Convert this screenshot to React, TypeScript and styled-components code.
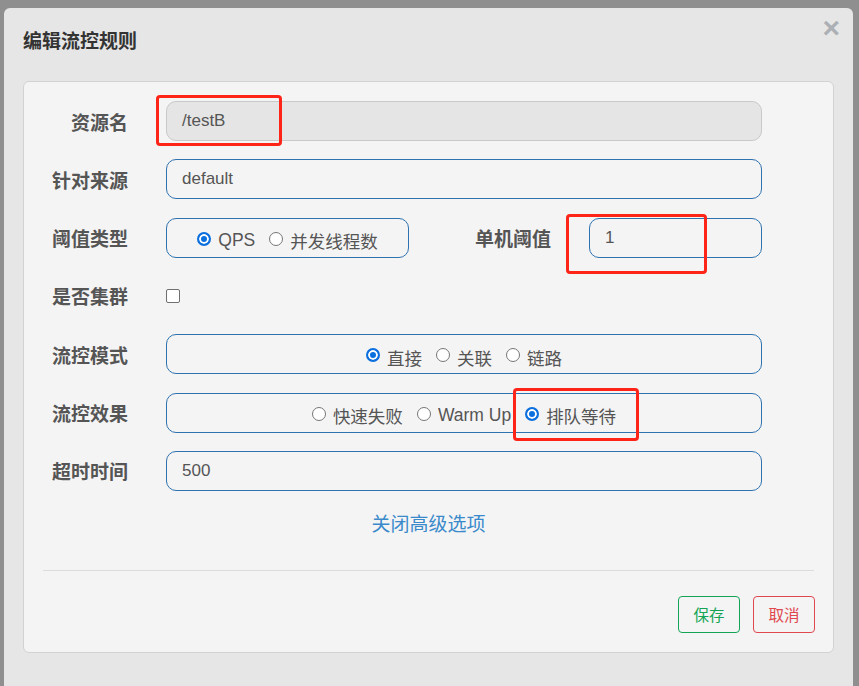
import styled, { createGlobalStyle } from "styled-components";

const GlobalStyle = createGlobalStyle`
  html, body {
    margin: 0;
    padding: 0;
    width: 100%;
    height: 100%;
    overflow: hidden;
  }
  body {
    font-family: "Liberation Sans", "Noto Sans CJK SC", sans-serif;
    background: #8f8f8f;
  }
`;

const Backdrop = styled.div`
  position: relative;
  width: 859px;
  height: 686px;
  background: #8f8f8f;
  padding: 8px 6px 0 4px;
  box-sizing: border-box;
  overflow: hidden;
`;

const Modal = styled.div`
  background: #e6e6e6;
  border-radius: 6px;
  height: 686px;
  display: flex;
  flex-direction: column;
`;

const Header = styled.div`
  height: 73px;
  display: flex;
  align-items: center;
  justify-content: space-between;
  padding: 2px 14px 12px 19px;
  box-sizing: border-box;
`;

const Title = styled.h4`
  margin: 0;
  font-size: 19px;
  font-weight: 700;
  color: #333;
  font-family: "Noto Sans CJK SC", sans-serif;
`;

const Close = styled.span`
  font-size: 30px;
  font-weight: 700;
  line-height: 1;
  color: #acb0b4;
  margin-top: -24px;
  margin-right: -1px;
  font-family: "Liberation Sans", sans-serif;
`;

const Panel = styled.div`
  margin: 0 19px;
  height: 572px;
  background: #f4f4f4;
  border: 1px solid #d2d2d2;
  border-radius: 6px;
  box-sizing: border-box;
  padding: 19px 71px 0 0;
  display: flex;
  flex-direction: column;
`;

const Rows = styled.div`
  display: flex;
  flex-direction: column;
  gap: 18.33px;
`;

const Row = styled.div`
  display: flex;
  align-items: center;
  height: 40px;
`;

const Label = styled.label<{ $width?: number }>`
  width: ${(p) => p.$width ?? 104}px;
  flex-shrink: 0;
  text-align: right;
  margin-right: 38px;
  font-size: 19px;
  font-weight: 700;
  color: #555;
  font-family: "Noto Sans CJK SC", sans-serif;
`;

const Input = styled.div<{ $disabled?: boolean; $width?: number }>`
  ${(p) => (p.$width ? `width: ${p.$width}px;` : "flex: 1;")}
  height: 40px;
  box-sizing: border-box;
  border: 1px solid ${(p) => (p.$disabled ? "#c9c9c9" : "#2e72b0")};
  background: ${(p) => (p.$disabled ? "#e5e5e5" : "transparent")};
  border-radius: 10px;
  padding: 0 15px;
  display: flex;
  align-items: center;
  font-size: 17px;
  color: #555;
`;

const RadioBox = styled.div<{ $width?: number }>`
  ${(p) => (p.$width ? `width: ${p.$width}px;` : "flex: 1;")}
  height: 40px;
  box-sizing: border-box;
  border: 1px solid #2e72b0;
  border-radius: 10px;
  display: flex;
  align-items: center;
  justify-content: center;
  gap: 14px;
  padding-top: 6px;
`;

const Option = styled.span`
  display: inline-flex;
  align-items: center;
  gap: 7px;
  font-size: 17.5px;
  color: #555;
  font-family: "Liberation Sans", "Noto Sans CJK SC", sans-serif;
`;

const Dot = styled.span<{ $on?: boolean }>`
  width: 14px;
  height: 14px;
  border-radius: 50%;
  box-sizing: border-box;
  margin-top: -4px;
  border: ${(p) => (p.$on ? "2px solid #0b6fde" : "1px solid #767676")};
  background: ${(p) => (p.$on ? "#0b6fde" : "#fff")};
  box-shadow: ${(p) => (p.$on ? "inset 0 0 0 2px #fff" : "none")};
`;

const Check = styled.span`
  width: 14px;
  height: 14px;
  box-sizing: border-box;
  border: 1px solid #6f6f6f;
  border-radius: 2px;
  background: #fff;
`;

const LinkRow = styled.div`
  display: flex;
  justify-content: center;
  padding-left: 71px;
  margin-top: 18px;
`;

const Link = styled.a`
  font-size: 19px;
  color: #3a8acb;
  font-family: "Noto Sans CJK SC", sans-serif;
`;

const Divider = styled.hr`
  margin: 34px -52px 0 19px;
  border: 0;
  border-top: 1px solid #dcdcdc;
`;

const Footer = styled.div`
  display: flex;
  justify-content: flex-end;
  gap: 13px;
  margin: 25px -53px 0 0;
`;

const Button = styled.button<{ $tone: "green" | "red" }>`
  width: 62px;
  height: 37px;
  border-radius: 4px;
  background: transparent;
  border: 1px solid ${(p) => (p.$tone === "green" ? "#13a456" : "#e0474f")};
  color: ${(p) => (p.$tone === "green" ? "#13a456" : "#e0474f")};
  font-size: 15.5px;
  font-family: "Noto Sans CJK SC", sans-serif;
  padding: 0;
`;

const Mark = styled.div<{ $x: number; $y: number; $w: number; $h: number }>`
  position: absolute;
  left: ${(p) => p.$x}px;
  top: ${(p) => p.$y}px;
  width: ${(p) => p.$w}px;
  height: ${(p) => p.$h}px;
  box-sizing: border-box;
  border: 3px solid #ff2418;
  border-radius: 4px;
  pointer-events: none;
`;

const Radio = ({ on, children }: { on?: boolean; children: string }) => (
  <Option>
    <Dot $on={on} />
    {children}
  </Option>
);

export default function App() {
  return (
    <>
      <GlobalStyle />
      <Backdrop>
        <Modal>
          <Header>
            <Title>编辑流控规则</Title>
            <Close>×</Close>
          </Header>
          <Panel>
            <Rows>
              <Row>
                <Label>资源名</Label>
                <Input $disabled>/testB</Input>
              </Row>
              <Row>
                <Label>针对来源</Label>
                <Input>default</Input>
              </Row>
              <Row>
                <Label>阈值类型</Label>
                <RadioBox $width={243}>
                  <Radio on>QPS</Radio>
                  <Radio>并发线程数</Radio>
                </RadioBox>
                <Label $width={142}>单机阈值</Label>
                <Input>1</Input>
              </Row>
              <Row>
                <Label>是否集群</Label>
                <Check />
              </Row>
              <Row>
                <Label>流控模式</Label>
                <RadioBox>
                  <Radio on>直接</Radio>
                  <Radio>关联</Radio>
                  <Radio>链路</Radio>
                </RadioBox>
              </Row>
              <Row>
                <Label>流控效果</Label>
                <RadioBox>
                  <Radio>快速失败</Radio>
                  <Radio>Warm Up</Radio>
                  <Radio on>排队等待</Radio>
                </RadioBox>
              </Row>
              <Row>
                <Label>超时时间</Label>
                <Input>500</Input>
              </Row>
            </Rows>
            <LinkRow>
              <Link>关闭高级选项</Link>
            </LinkRow>
            <Divider />
            <Footer>
              <Button $tone="green">保存</Button>
              <Button $tone="red">取消</Button>
            </Footer>
          </Panel>
        </Modal>
        <Mark $x={156} $y={95} $w={126} $h={51} />
        <Mark $x={566} $y={214} $w={141} $h={60} />
        <Mark $x={513} $y={388} $w={126} $h={53} />
      </Backdrop>
    </>
  );
}
